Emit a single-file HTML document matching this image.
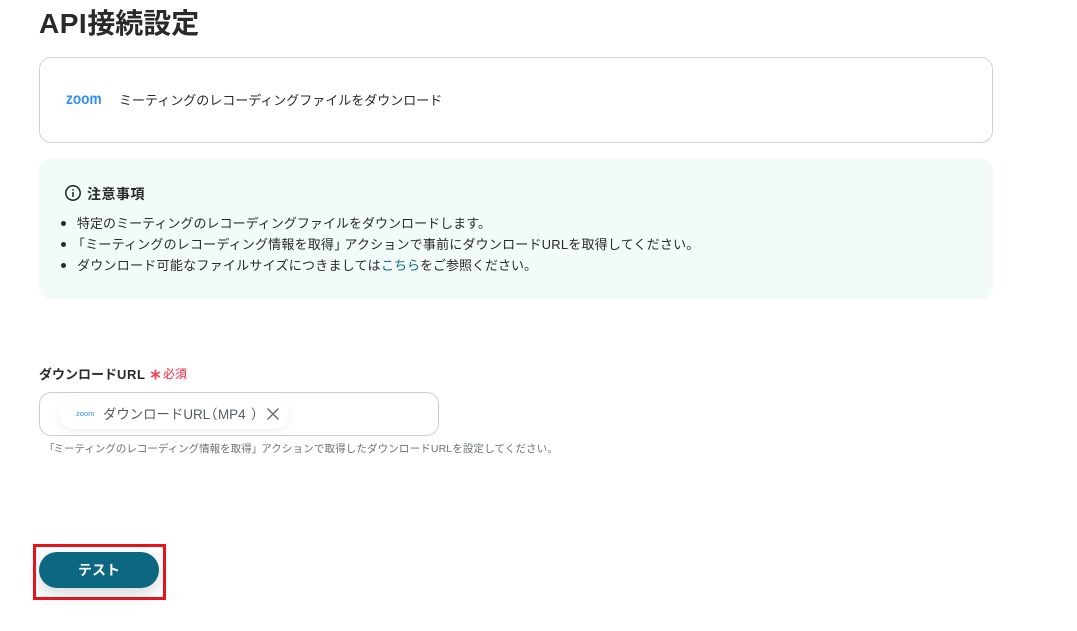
<!DOCTYPE html>
<html lang="ja"><head><meta charset="utf-8"><style>
*{box-sizing:border-box}
html,body{margin:0;padding:0;background:#fff}
body{width:1077px;height:631px;position:relative;overflow:hidden;font-family:"Liberation Sans","Noto Sans CJK JP",sans-serif;color:#283237}
.a{position:absolute;white-space:nowrap;font-family:"Liberation Sans","Noto Sans CJK JP",sans-serif}
.z{position:absolute;font-family:"Liberation Sans",sans-serif;font-weight:700;color:#2d8cff;white-space:nowrap;transform-origin:0 50%}
</style></head><body>
<div class="a" style="left:39px;top:4px;font-size:28px;line-height:40px;font-weight:700;color:#2a2a2a"><span style="letter-spacing:.5px">API</span>接続設定</div>
<div class="a" style="left:39px;top:57px;width:954px;height:86px;border:1px solid #cfcfcf;border-radius:12px"></div>
<div class="z" style="left:66px;top:91px;font-size:15.5px;line-height:18px;transform:scaleX(.88)">zoom</div>
<div class="a" style="left:119px;top:91px;font-size:13px;line-height:20px;color:#2a2a2a">ミーティングのレコーディングファイルをダウンロード</div>
<div class="a" style="left:39px;top:159px;width:954px;height:140px;background:#f2fafa;border-radius:12px"></div>
<svg class="a" style="left:64px;top:184px" width="18" height="18" viewBox="0 0 18 18" fill="none" stroke="#222" stroke-width="1.5"><circle cx="9" cy="9" r="7.2"/><path d="M9 8v5"/><path d="M9 5v1.6"/></svg>
<div class="a" style="left:87px;top:184px;font-size:14px;line-height:20px;letter-spacing:.5px;font-weight:700;color:#2a2a2a">注意事項</div>
<div class="a" style="left:77px;top:214px;font-size:13px;line-height:20px;letter-spacing:.03px;color:#2a2a2a">特定のミーティングのレコーディングファイルをダウンロードします。</div>
<div class="a" style="left:77px;top:235px;font-size:13px;line-height:20px;color:#2a2a2a"><span style="letter-spacing:.19px"><span style="margin-left:-5px">「</span>ミーティングのレコーディング情報を取得<span style="margin-right:-3px">」</span></span><span style="letter-spacing:.2px">アクションで事前にダウンロードURLを取得してください。</span></div>
<div class="a" style="left:77px;top:256px;font-size:13px;line-height:20px;color:#2a2a2a"><span style="letter-spacing:.26px">ダウンロード可能なファイルサイズにつきましては</span><span style="color:#0b6a85">こちら</span>をご参照ください。</div>
<div class="a" style="left:61px;top:221px;width:5px;height:5px;border-radius:50%;background:#2a2a2a"></div>
<div class="a" style="left:61px;top:242px;width:5px;height:5px;border-radius:50%;background:#2a2a2a"></div>
<div class="a" style="left:61px;top:263px;width:5px;height:5px;border-radius:50%;background:#2a2a2a"></div>
<div class="a" style="left:39px;top:365px;font-size:13px;line-height:20px;font-weight:700;color:#2a2a2a">ダウンロード<span style="letter-spacing:.6px">URL</span></div>
<svg class="a" style="left:150px;top:369px" width="11" height="11" viewBox="0 0 11 11" stroke="#f0475a" stroke-width="1.8" fill="none"><path d="M5.5 .5v10M1.2 3l8.6 5M9.8 3L1.2 8"/></svg>
<div class="a" style="left:163px;top:365px;font-size:12px;line-height:18px;font-weight:500;color:#f0475a">必須</div>
<div class="a" style="left:39px;top:392px;width:400px;height:44px;border:1px solid #c9ced6;border-radius:12px"></div>
<div class="a" style="left:59px;top:399px;width:230px;height:30px;border-radius:15px;background:#fff;box-shadow:0 2px 8px rgba(40,60,80,.08)"></div>
<div class="z" style="left:76px;top:409px;font-size:7.5px;line-height:10px;font-weight:400">zoom</div>
<div class="a" style="left:103px;top:405px;font-size:13.4px;line-height:20px;color:#555c63">ダウンロードURL</div>
<div class="a" style="left:204px;top:405px;font-size:13.4px;line-height:20px;color:#555c63">（</div>
<div class="a" style="left:218px;top:405px;font-size:13.4px;line-height:20px;color:#555c63">MP4</div>
<div class="a" style="left:251px;top:405px;font-size:13.4px;line-height:20px;color:#555c63">）</div>
<svg class="a" style="left:266px;top:407px" width="14" height="14" viewBox="0 0 14 14" stroke="#666c73" stroke-width="1.4" fill="none"><path d="M1.5 1.5L12.5 12.5M12.5 1.5L1.5 12.5"/></svg>
<div class="a" style="left:44px;top:441px;font-size:10.5px;line-height:16px;color:#6b7076"><span><span style="margin-right:-1px">「</span>ミーティングのレコーディング情報を取得<span style="margin-right:-1px">」</span></span><span style="letter-spacing:.14px">アクションで取得したダウンロードURLを設定してください。</span></div>
<div class="a" style="left:33px;top:544px;width:133px;height:56px;border:3px solid #e8141c"></div>
<div class="a" style="left:39px;top:552px;width:120px;height:36px;border-radius:18px;background:#0b6880;box-shadow:0 6px 16px rgba(40,60,80,.2);color:#fff;font-size:14px;line-height:36px;font-weight:700;text-align:center">テスト</div>
</body></html>
